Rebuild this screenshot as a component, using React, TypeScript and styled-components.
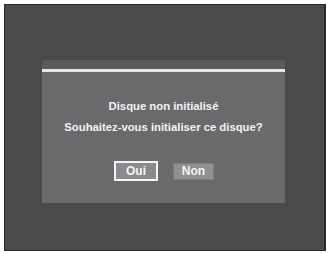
import React from "react";
import styled, { createGlobalStyle } from "styled-components";

const Global = createGlobalStyle`
  html, body { margin: 0; padding: 0; background: #ffffff; }
  body { font-family: "Liberation Sans", Arial, sans-serif; }
`;

const Screen = styled.div`
  box-sizing: border-box;
  margin: 4px 0 0 4px;
  width: 322px;
  height: 247px;
  background: #4a4a4c;
  border: 1px solid #2a2a2c;
  border-right-width: 2px;
  padding: 55px 0 0 37px;
`;

const Dialog = styled.div`
  width: 243px;
  height: 143px;
  background: #6a6a6c;
  display: flex;
  flex-direction: column;
`;

const TitleStrip = styled.div`
  height: 9px;
  background: #5a5a5c;
  border-bottom: 3px solid #e6e6e6;
`;

const Body = styled.div`
  display: flex;
  flex-direction: column;
  align-items: center;
  padding-top: 24px;
`;

const Message = styled.div`
  color: #f2f2f2;
  font-weight: bold;
  font-size: 11.3px;
  line-height: 21px;
  text-align: center;
`;

const Buttons = styled.div`
  display: flex;
  align-items: center;
  gap: 15px;
  margin-top: 23px;
  margin-left: 1px;
`;

const Button = styled.div<{ $selected?: boolean }>`
  box-sizing: border-box;
  display: flex;
  align-items: center;
  justify-content: center;
  width: ${(p) => (p.$selected ? 44 : 41)}px;
  height: ${(p) => (p.$selected ? 20 : 17)}px;
  background: ${(p) => (p.$selected ? "#8a8a8c" : "#909090")};
  border: ${(p) => (p.$selected ? "2px solid #f4f4f4" : "1px solid #7c7c7e")};
  color: #f4f4f4;
  font-weight: bold;
  font-size: 12px;
`;

export default function App() {
  return (
    <>
      <Global />
      <Screen>
        <Dialog>
          <TitleStrip />
          <Body>
            <Message>Disque non initialisé</Message>
            <Message>Souhaitez-vous initialiser ce disque?</Message>
            <Buttons>
              <Button $selected>Oui</Button>
              <Button>Non</Button>
            </Buttons>
          </Body>
        </Dialog>
      </Screen>
    </>
  );
}
